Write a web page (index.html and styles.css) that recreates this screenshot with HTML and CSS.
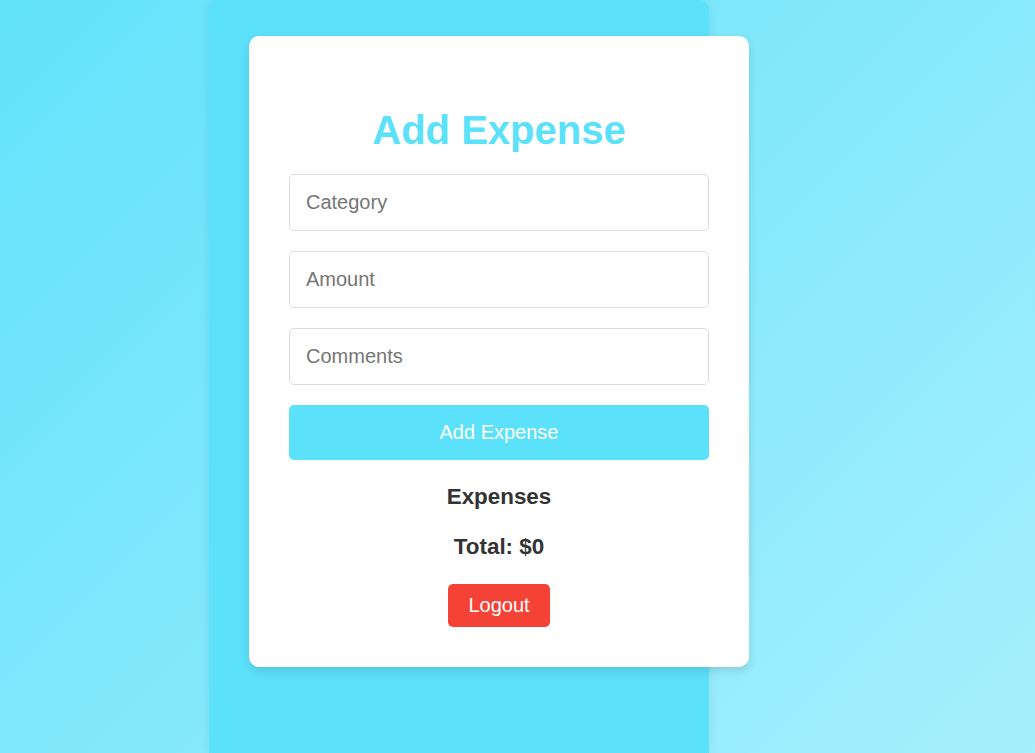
FILE: index.html
```html
<!DOCTYPE html>
<html lang="en">
<head>
<meta charset="utf-8">
<title>Add Expense</title>
<link rel="stylesheet" href="styles.css">
</head>
<body>
<div class="page">
  <div class="column">
    <div class="card">
      <h1 class="title">Add Expense</h1>
      <form class="form">
        <input class="field" type="text" placeholder="Category">
        <input class="field" type="text" placeholder="Amount">
        <input class="field" type="text" placeholder="Comments">
        <button class="add-btn" type="button">Add Expense</button>
      </form>
      <h3 class="section">Expenses</h3>
      <h3 class="total">Total: $0</h3>
      <button class="logout" type="button">Logout</button>
    </div>
  </div>
</div>
</body>
</html>
```
FILE: styles.css
```css
html, body {
  margin: 0;
  height: 100%;
}
body {
  font-family: "Liberation Sans", Arial, sans-serif;
  background: linear-gradient(135deg, #62e2fb 0%, #a6effd 100%);
  overflow: hidden;
}
.page {
  display: flex;
  padding-left: 209px;
  height: 100%;
}
.column {
  width: 500px;
  box-sizing: border-box;
  padding: 36px 0 0 40px;
  background: #5ce1fb;
  border-radius: 10px 10px 0 0;
  box-shadow: 0 0 12px rgba(0, 0, 0, 0.08);
  min-height: 100%;
}
.card {
  width: 500px;
  box-sizing: border-box;
  background: #fff;
  border-radius: 10px;
  padding: 72px 40px 40px;
  box-shadow: 0 4px 10px rgba(0, 0, 0, 0.12);
  display: flex;
  flex-direction: column;
  align-items: center;
}
.title {
  margin: 0 0 21px;
  font-size: 40px;
  font-weight: bold;
  color: #5ce1fb;
  line-height: normal;
}
.form {
  width: 100%;
  display: flex;
  flex-direction: column;
  gap: 20px;
}
.field {
  font-family: "Liberation Sans", Arial, sans-serif;
  font-size: 20px;
  padding: 16px 16px;
  border: 1px solid #ddd;
  border-radius: 5px;
  color: #333;
  outline: none;
  box-sizing: border-box;
  width: 100%;
  height: 57px;
}
.field::placeholder {
  color: #757575;
}
.add-btn {
  font-family: "Liberation Sans", Arial, sans-serif;
  font-size: 20px;
  height: 55px;
  border: none;
  border-radius: 5px;
  background: #5ce1fb;
  color: #fff;
  cursor: pointer;
}
.section, .total {
  font-size: 22.4px;
  font-weight: bold;
  color: #333;
  line-height: normal;
}
.section {
  margin: 24px 0 0;
}
.total {
  margin: 24px 0 0;
}
.logout {
  margin-top: 24px;
  font-family: "Liberation Sans", Arial, sans-serif;
  font-size: 20px;
  padding: 10px 20px;
  height: 43px;
  border: none;
  border-radius: 5px;
  background: #f44336;
  color: #fff;
  cursor: pointer;
}
```
